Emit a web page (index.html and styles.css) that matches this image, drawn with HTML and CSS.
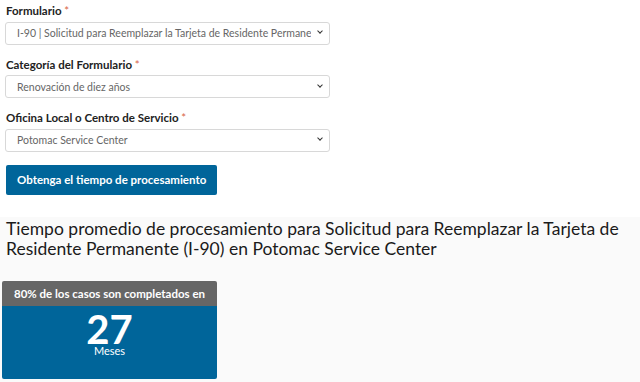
FILE: index.html
```html
<!DOCTYPE html>
<html lang="es">
  <head>
    <meta charset="UTF-8" />
    <meta name="viewport" content="width=device-width, initial-scale=1.0" />
    <title>Tiempos de procesamiento</title>
    <link rel="stylesheet" href="styles.css">
  </head>
  <body>
    <form class="lookup" id="lookupForm">
      <div class="field">
        <label for="form">Formulario <span class="req">*</span></label>
        <div class="select-wrap">
          <select id="form">
            <option>I-90 | Solicitud para Reemplazar la Tarjeta de Residente Permanente</option>
          </select>
        </div>
      </div>
      <div class="field">
        <label for="category">Categoría del Formulario <span class="req">*</span></label>
        <div class="select-wrap">
          <select id="category">
            <option>Renovación de diez años</option>
          </select>
        </div>
      </div>
      <div class="field">
        <label for="office">Oficina Local o Centro de Servicio <span class="req">*</span></label>
        <div class="select-wrap">
          <select id="office">
            <option>Potomac Service Center</option>
          </select>
        </div>
      </div>
      <button type="submit">Obtenga el tiempo de procesamiento</button>
    </form>

    <div class="result">
      <h2>Tiempo promedio de procesamiento para Solicitud para Reemplazar la Tarjeta de Residente Permanente (I-90) en Potomac Service Center</h2>
      <div class="card">
        <div class="card-head">80% de los casos son completados en</div>
        <div class="card-body">
          <div class="number">27</div>
          <div class="unit">Meses</div>
        </div>
      </div>
    </div>
  </body>
</html>
```

FILE: styles.css
```css
body {
  margin: 0;
  font-family: Lato, "Open Sans", sans-serif;
  color: #1b1b1b;
  background-color: #fff;
}

.lookup {
  padding: 3px 310px 0 5px;
}

.field {
  margin-bottom: 12px;
}

.field label {
  display: block;
  font-size: 11.5px;
  line-height: 15px;
  font-weight: bold;
  color: #222;
  margin: 0 0 3px 1px;
}

.req {
  color: #d9664a;
  font-weight: normal;
}

.select-wrap {
  position: relative;
}

.select-wrap::after {
  content: "";
  position: absolute;
  right: 8px;
  top: 8px;
  width: 3px;
  height: 3px;
  border-right: 1.5px solid #333;
  border-bottom: 1.5px solid #333;
  transform: rotate(45deg);
  pointer-events: none;
}

.field select {
  width: 100%;
  height: 23px;
  padding: 0 18px 0 11px;
  font-family: inherit;
  font-size: 10.5px;
  color: #666;
  background-color: #fff;
  border: 1px solid #d8d8d8;
  border-radius: 3px;
  appearance: none;
  -webkit-appearance: none;
}

.lookup button[type="submit"] {
  margin: 1px 0 0 1px;
  height: 30px;
  padding: 0 11px;
  font-family: inherit;
  font-size: 11.5px;
  font-weight: bold;
  color: #fff;
  background-color: #00659a;
  border: none;
  border-radius: 2px;
}

.result {
  margin-top: 22px;
  background-color: #fafafa;
  height: 167px;
  padding-top: 1px;
  border-bottom: 2px solid #555;
  box-sizing: border-box;
}

.result h2 {
  margin: 1px 0 0 6px;
  font-size: 17.5px;
  font-weight: normal;
  line-height: 20px;
}

.card {
  width: 215px;
  margin: 22px 0 0 2px;
  border-radius: 2px;
  overflow: hidden;
  color: #fff;
  text-align: center;
}

.card-head {
  background-color: #666;
  height: 25px;
  line-height: 25px;
  font-size: 11.5px;
  font-weight: bold;
}

.card-body {
  background-color: #00659a;
  height: 73px;
}

.number {
  font-size: 40px;
  font-weight: bold;
  line-height: 30px;
  padding-top: 8px;
}

.unit {
  font-size: 11px;
  line-height: 14px;
}
```
